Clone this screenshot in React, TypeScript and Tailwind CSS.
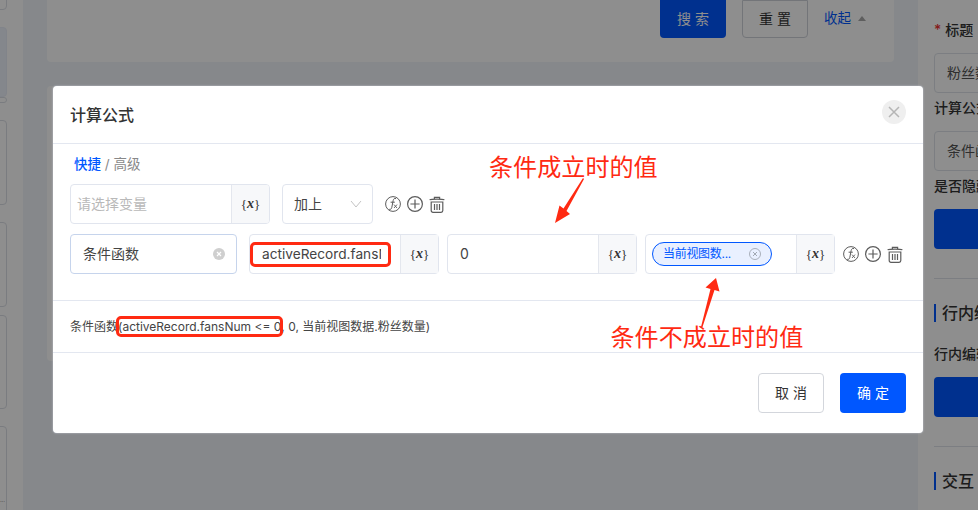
import React from "react";

const FONT = "font-['Inter','Noto_Sans_CJK_SC',sans-serif]";

function XAddon() {
  return (
    <div className="flex w-[38px] shrink-0 items-center justify-center border-l border-[#e4e7ee] bg-[#f7f8fa] font-['Liberation_Serif',serif] text-[13px] font-bold leading-none text-[#333]">
      <span className="font-normal">{"{"}</span>
      <span className="text-[14px] italic">x</span>
      <span className="font-normal">{"}"}</span>
    </div>
  );
}

function RowIcons() {
  return (
    <div className="flex items-center gap-[6px] text-[#5c5c5c]">
      <svg width="16" height="16" viewBox="0 0 16 16" fill="none" stroke="currentColor" strokeWidth="1">
        <circle cx="8" cy="8" r="7.4" />
        <path d="M11 2.6c-1.6-.5-2.5.3-2.8 1.8L6.8 11.4c-.3 1.5-1.1 2.3-2.6 1.9M5.6 6.2h4.2" />
        <path d="M9 8.6l3 3.4M12 8.6l-3 3.4" strokeWidth="0.9" />
      </svg>
      <svg width="16" height="16" viewBox="0 0 16 16" fill="none" stroke="currentColor" strokeWidth="1.2">
        <circle cx="8" cy="8" r="7.4" />
        <path d="M8 3.4v9.2M3.4 8h9.2" />
      </svg>
      <svg width="16" height="17" viewBox="0 0 16 17" fill="none" stroke="currentColor" strokeWidth="1.2">
        <path d="M.6 3.8c2-.9 12.800-.9 14.800 0M5.400 3.200V1.300h5.200v1.900" />
        <path d="M2.200 6h11.600v8.600a1.700 1.700 0 0 1-1.700 1.700H3.900a1.700 1.700 0 0 1-1.700-1.700z" />
        <path d="M5.500 8v6M8 8v6M10.500 8v6" />
      </svg>
    </div>
  );
}

function Chevron() {
  return (
    <svg width="12" height="8" viewBox="0 0 12 8" fill="none" stroke="#c4c4c4" strokeWidth="1">
      <path d="M1 1l5 6 5-6" />
    </svg>
  );
}

function FieldGroup({ children }: { children: React.ReactNode }) {
  return (
    <div className="relative flex h-10 w-[190px] shrink-0 rounded border border-[#e1e5ee] bg-white">
      {children}
    </div>
  );
}

function SideCard({ className }: { className: string }) {
  return <div className={`-ml-1 w-[11px] shrink-0 rounded-r border border-[#dcdfe6] ${className}`} />;
}

function RightLabel({ children, cls = "" }: { children: React.ReactNode; cls?: string }) {
  return <div className={`h-5 whitespace-nowrap text-sm font-medium leading-5 text-[#333] ${cls}`}>{children}</div>;
}

function RightHeading({ children, cls = "" }: { children: React.ReactNode; cls?: string }) {
  return (
    <div className={`flex h-[18px] items-center gap-[6px] whitespace-nowrap text-base font-medium text-[#333] ${cls}`}>
      <span className="h-[18px] w-[2px] shrink-0 bg-[#0057ff]" />
      {children}
    </div>
  );
}

function RightInput({ children }: { children: React.ReactNode }) {
  return (
    <div className="mt-[13px] flex h-10 w-[120px] shrink-0 items-center whitespace-nowrap rounded border border-[#dfe3ea] pl-3 text-sm text-[#555]">
      {children}
    </div>
  );
}

export default function App() {
  return (
    <div className={`relative flex h-[510px] w-[978px] overflow-hidden bg-[#f0f5f9] ${FONT}`}>
      {/* left rail */}
      <aside className="relative flex h-full w-[23px] shrink-0 flex-col bg-white">
        <SideCard className="-mt-[4px] h-[14px]" />
        <SideCard className="mt-[17px] h-[70px] !border-[#e8edf8] bg-[#eef2fb]" />
        <SideCard className="h-[6px]" />
        <SideCard className="mt-[17px] h-[85px]" />
        <SideCard className="mt-[17px] h-[85px]" />
        <SideCard className="mt-[8px] h-[94px]" />
        <SideCard className="mt-[17px] h-[90px]" />
        <span className="absolute bottom-[7px] left-0 text-[6px] leading-none tracking-tight text-[#666]">...</span>
      </aside>

      {/* main column */}
      <main className="flex min-w-0 flex-1 flex-col px-6">
        <section className="flex h-[62px] shrink-0 items-start justify-end gap-4 rounded-b bg-white pr-[28px]">
          <button className="flex h-[38px] w-[66px] items-center justify-center rounded-b bg-[#0057ff] text-sm text-white">
            搜 索
          </button>
          <button className="flex h-[38px] w-[66px] items-center justify-center rounded-b border border-[#cfd3da] text-sm text-[#333]">
            重 置
          </button>
          <div className="flex h-[36px] items-center gap-[7px] text-[13.5px] text-[#0057ff]">
            收起
            <span className="h-0 w-0 border-x-4 border-b-[5px] border-x-transparent border-b-[#aaa]" />
          </div>
        </section>
        <section className="mt-6 h-[275px] rounded bg-white" />
      </main>

      {/* right panel */}
      <aside className="flex h-full w-[60px] shrink-0 flex-col overflow-hidden bg-white pl-4">
        <RightLabel cls="mt-[20px]">
          <span className="mr-1 text-[#ee3333]">*</span>标题
        </RightLabel>
        <RightInput>粉丝数量</RightInput>
        <RightLabel cls="mt-[5px]">计算公式</RightLabel>
        <RightInput>条件函数</RightInput>
        <RightLabel cls="mt-[5px]">是否隐藏</RightLabel>
        <div className="mt-[13px] h-10 w-[120px] shrink-0 rounded bg-[#0057ff]" />
        <div className="mt-[29px] h-px w-[120px] shrink-0 bg-[#dfe3ea]" />
        <RightHeading cls="mt-[25px]">行内编辑</RightHeading>
        <RightLabel cls="mt-[22px]">行内编辑</RightLabel>
        <div className="mt-[13px] h-10 w-[120px] shrink-0 rounded bg-[#0057ff]" />
        <div className="mt-[29px] h-px w-[120px] shrink-0 bg-[#dfe3ea]" />
        <RightHeading cls="mt-[25px]">交互</RightHeading>
      </aside>

      {/* mask */}
      <div className="absolute inset-0 bg-[rgba(0,0,0,0.445)]" />

      {/* modal */}
      <div className="absolute left-[53px] top-[86px] flex h-[347px] w-[870px] flex-col rounded bg-white shadow-[0_0_2px_rgba(210,215,230,0.9)]">
        <header className="flex h-[58px] shrink-0 items-start justify-between border-b border-[#e3e7f0] px-[17px]">
          <h2 className="mt-[18px] text-base font-medium leading-[22px] text-[#333]">计算公式</h2>
          <button className="mt-[14px] flex h-6 w-6 items-center justify-center rounded-full bg-[#efefef]">
            <svg width="12" height="12" viewBox="0 0 12 12" stroke="#b5b5b5" strokeWidth="1.5">
              <path d="M1 1l10 10M11 1L1 11" />
            </svg>
          </button>
        </header>

        <div className="flex h-[156px] shrink-0 flex-col pl-[17px]">
          <div className="mt-[10px] h-5 pl-1 text-[13.5px] leading-5 text-[#888]">
            <span className="font-medium text-[#0057ff]">快捷</span> / 高级
          </div>

          <div className="mt-[10px] flex h-10 items-center">
            <div className="flex h-10 w-[200px] overflow-hidden rounded border border-[#e1e5ee]">
              <div className="flex flex-1 items-center pl-[6px] text-sm text-[#b9b9b9]">请选择变量</div>
              <XAddon />
            </div>
            <div className="ml-3 flex h-10 w-[91px] items-center justify-between rounded border border-[#e1e5ee] pl-[11px] pr-[10px] text-sm text-[#444]">
              加上
              <Chevron />
            </div>
            <div className="ml-3">
              <RowIcons />
            </div>
          </div>

          <div className="mt-[10px] flex h-10 items-center gap-2">
            <div className="mr-1 flex h-10 w-[167px] shrink-0 items-center justify-between rounded border border-[#c6d4ec] pl-3 pr-[11px] text-sm text-[#444]">
              条件函数
              <span className="flex h-3 w-3 items-center justify-center rounded-full bg-[#cfcfcf]">
                <svg width="6" height="6" viewBox="0 0 6 6" stroke="#fff" strokeWidth="1.2">
                  <path d="M1 1l4 4M5 1L1 5" />
                </svg>
              </span>
            </div>
            <FieldGroup>
              <div className="flex min-w-0 flex-1 items-center pl-3">
                <div className="w-[119px] overflow-hidden whitespace-nowrap text-[13.7px] text-[#444]">activeRecord.fansNum</div>
              </div>
              <XAddon />
              <span className="absolute left-0 top-[7px] h-[25px] w-[141px] rounded-[5px] border-[3px] border-[#ff2a12]" />
            </FieldGroup>
            <FieldGroup>
              <div className="flex flex-1 items-center pl-3 text-sm text-[#444]">0</div>
              <XAddon />
            </FieldGroup>
            <FieldGroup>
              <div className="flex min-w-0 flex-1 items-center pl-[6px]">
                <div className="flex h-6 w-[120px] items-center justify-between rounded-full border border-[#0057ff] bg-[#e9f0ff] pl-[10px] pr-[10px] text-xs tracking-tight text-[#0057ff]">
                  当前视图数...
                  <span className="flex h-3 w-3 items-center justify-center rounded-full border border-[#aab0bb]">
                    <svg width="6" height="6" viewBox="0 0 6 6" stroke="#9aa0aa" strokeWidth="0.9">
                      <path d="M1 1l4 4M5 1L1 5" />
                    </svg>
                  </span>
                </div>
              </div>
              <XAddon />
            </FieldGroup>
            <RowIcons />
          </div>
        </div>

        <div className="flex h-[53px] shrink-0 items-center border-y border-[#e3e7f0] pl-[17px] text-xs text-[#444]">
          条件函数
          <span className="relative">
            (activeRecord.fansNum &lt;= 0
            <span className="absolute -left-[2px] -right-[2px] -top-[3px] -bottom-[2px] rounded-[5px] border-[3px] border-[#ff2a12]" />
          </span>
          , 0, 当前视图数据.粉丝数量)
        </div>

        <footer className="flex flex-1 items-start justify-end gap-4 pr-[17px] pt-[20px]">
          <button className="flex h-10 w-[66px] items-center justify-center rounded border border-[#d3d6dc] text-sm text-[#333]">
            取 消
          </button>
          <button className="flex h-10 w-[66px] items-center justify-center rounded bg-[#0057ff] text-sm text-white">
            确 定
          </button>
        </footer>
      </div>

      {/* annotations */}
      <div className="absolute left-[489px] top-[149px] font-['Noto_Sans_CJK_SC',sans-serif] text-[24.1px] font-normal leading-[34px] text-[#ff2a12]">
        条件成立时的值
      </div>
      <div className="absolute left-[610.500px] top-[319px] font-['Noto_Sans_CJK_SC',sans-serif] text-[24.1px] font-normal leading-[34px] text-[#ff2a12]">
        条件不成立时的值
      </div>
      <svg className="absolute left-[550px] top-[175px]" width="40" height="50" viewBox="0 0 40 50" fill="#ff2a12">
        <path d="M33 3L13.500 33.500 9.500 30.500 5 48 20 39 16.500 36 34 4z" />
      </svg>
      <svg className="absolute left-[695px] top-[274px]" width="30" height="56" viewBox="0 0 30 56" fill="#ff2a12">
        <path d="M6 53L15.500 15 10.500 13.500 21 4 24.500 17.500 19.500 16 7.500 53z" />
      </svg>
    </div>
  );
}
